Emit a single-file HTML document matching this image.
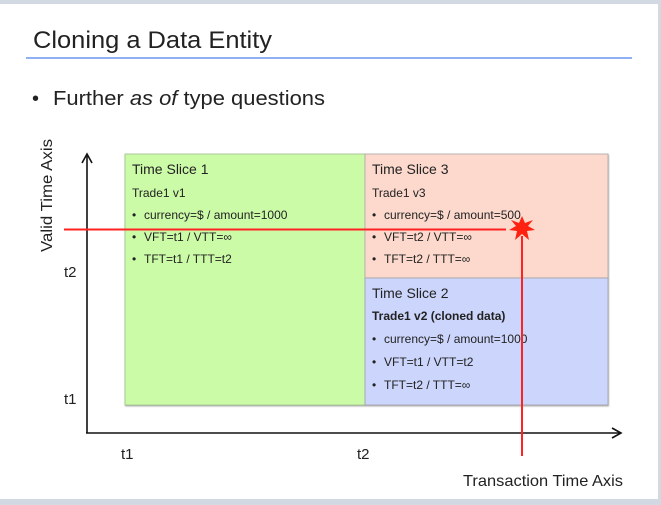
<!DOCTYPE html>
<html><head><meta charset="utf-8"><style>
html,body{margin:0;padding:0;}
body{width:661px;height:505px;background:#d3d9e2;position:relative;overflow:hidden;font-family:"Liberation Sans",Arial,sans-serif;}
#slide{position:absolute;left:0;top:4px;width:658px;height:495px;background:#fff;}
</style></head><body>
<div id="slide"></div>
<svg width="661" height="505" style="position:absolute;left:0;top:0" xmlns="http://www.w3.org/2000/svg" font-family="Liberation Sans, Arial, sans-serif">
<text x="33" y="48" font-size="24" fill="#222" textLength="239" lengthAdjust="spacingAndGlyphs">Cloning a Data Entity</text>
<rect x="26" y="57" width="606" height="2" fill="#8fb0f3"/>
<text x="32" y="105" font-size="20" fill="#222">•</text>
<text x="53" y="105" font-size="20" fill="#222" textLength="272" lengthAdjust="spacingAndGlyphs">Further <tspan font-style="italic">as of</tspan> type questions</text>
<defs><filter id="sh"><feDropShadow dx="0.5" dy="1" stdDeviation="0.8" flood-color="#000" flood-opacity="0.35"/></filter></defs>
<g filter="url(#sh)">
<rect x="125" y="154" width="240" height="251" fill="#ccfba8" stroke="#9dbf8a" stroke-width="0.8"/>
<rect x="365" y="154" width="243" height="124" fill="#fcd9cc" stroke="#a9a9a9" stroke-width="0.8"/>
<rect x="365" y="278" width="243" height="127" fill="#ccd5fb" stroke="#a0a0a8" stroke-width="0.8"/>
</g>
<g fill="#222" font-size="12">
<text x="132" y="174" font-size="14">Time Slice 1</text>
<text x="132" y="197">Trade1 v1</text>
<text x="132" y="219">•</text><text x="144" y="219">currency=$ / amount=1000</text>
<text x="132" y="241">•</text><text x="144" y="241">VFT=t1 / VTT=∞</text>
<text x="132" y="263">•</text><text x="144" y="263">TFT=t1 / TTT=t2</text>
<text x="372" y="174" font-size="14">Time Slice 3</text>
<text x="372" y="197">Trade1 v3</text>
<text x="372" y="219">•</text><text x="384" y="219">currency=$ / amount=500</text>
<text x="372" y="241">•</text><text x="384" y="241">VFT=t2 / VTT=∞</text>
<text x="372" y="263">•</text><text x="384" y="263">TFT=t2 / TTT=∞</text>
<text x="372" y="298" font-size="14">Time Slice 2</text>
<text x="372" y="320" font-weight="bold">Trade1 v2 (cloned data)</text>
<text x="372" y="343">•</text><text x="384" y="343">currency=$ / amount=1000</text>
<text x="372" y="366">•</text><text x="384" y="366">VFT=t1 / VTT=t2</text>
<text x="372" y="389">•</text><text x="384" y="389">TFT=t2 / TTT=∞</text>
<text x="64" y="277" font-size="15">t2</text>
<text x="64" y="404" font-size="15">t1</text>
<text x="121" y="459" font-size="15">t1</text>
<text x="357" y="459" font-size="15">t2</text>
<text x="463" y="486" font-size="16" textLength="160" lengthAdjust="spacingAndGlyphs">Transaction Time Axis</text>
<text transform="translate(52,252) rotate(-90)" font-size="16" textLength="113" lengthAdjust="spacingAndGlyphs">Valid Time Axis</text>
</g>
<g stroke="#111" stroke-width="1.6" fill="none">
<line x1="87" y1="433" x2="87" y2="156"/>
<polyline points="82,163 87,154 92,163"/>
<line x1="86" y1="433" x2="620" y2="433"/>
<polyline points="612,428 621,433 612,438"/>
</g>
<g stroke="#f22" stroke-width="2">
<line x1="64" y1="229.5" x2="506" y2="229.5"/>
<line x1="522" y1="236" x2="522" y2="456"/>
</g>
<polygon fill="#f21" points="522,216 525,223 533,220 528,226 535,230 527,231 529,240 522,234 515,240 517,231 509,230 516,226 511,220 519,223"/>
</svg>
</body></html>
